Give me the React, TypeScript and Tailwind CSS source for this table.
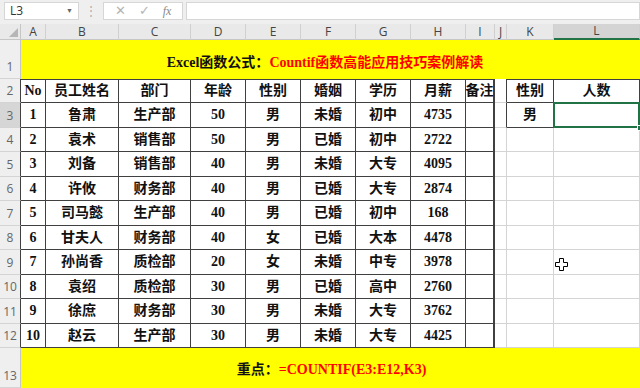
import React from "react";

const cols = ["A", "B", "C", "D", "E", "F", "G", "H", "I", "J", "K", "L"];

const rows = [
  ["1", "鲁肃", "生产部", "50", "男", "未婚", "初中", "4735"],
  ["2", "袁术", "销售部", "50", "男", "已婚", "初中", "2722"],
  ["3", "刘备", "销售部", "40", "男", "未婚", "大专", "4095"],
  ["4", "许攸", "财务部", "40", "男", "已婚", "大专", "2874"],
  ["5", "司马懿", "生产部", "40", "男", "已婚", "初中", "168"],
  ["6", "甘夫人", "财务部", "40", "女", "已婚", "大本", "4478"],
  ["7", "孙尚香", "质检部", "20", "女", "未婚", "中专", "3978"],
  ["8", "袁绍", "质检部", "30", "男", "已婚", "高中", "2760"],
  ["9", "徐庶", "财务部", "30", "男", "未婚", "大专", "3762"],
  ["10", "赵云", "生产部", "30", "男", "未婚", "大专", "4425"],
];

const header = ["No", "员工姓名", "部门", "年龄", "性别", "婚姻", "学历", "月薪", "备注"];

const RowHead = ({ n, dark, active, h }: { n: number; dark?: boolean; active?: boolean; h: string }) => (
  <div
    className={`${h} flex items-end justify-center pb-[2px] border-b border-[#d4d4d4] border-r text-[12px] text-[#666] font-['Open_Sans',sans-serif] ${
      dark ? "border-r-[#404040]" : "border-r-[#c6c6c6]"
    } ${active ? "bg-[#d6d6d6]" : "bg-[#efefef]"}`}
  >
    {n}
  </div>
);

const App = () => {
  return (
    <div className="relative w-[640px] h-[388px] overflow-hidden bg-white font-['Liberation_Serif','Noto_Sans_CJK_SC',serif] text-[#111]">
      {/* formula bar */}
      <div className="h-[24px] bg-[#efefef] flex items-start pt-[2px] font-['Open_Sans',sans-serif]">
        <div className="ml-[4px] w-[75px] h-[18px] bg-white border border-[#d6d6d6] flex items-center justify-between px-[5px] text-[12px] text-[#333]">
          <span>L3</span>
          <span className="text-[7px] text-[#666]">▼</span>
        </div>
        <div className="w-[24px] h-[18px] flex items-center justify-center text-[#b0b0b0] text-[12px]">⋮</div>
        <div className="w-[80px] h-[18px] bg-white border border-[#d6d6d6] flex items-center justify-around px-[4px] text-[#b4b4b4]">
          <span className="text-[13px]">✕</span>
          <span className="text-[13px]">✓</span>
          <span className="text-[12px] italic font-['Liberation_Serif',serif] text-[#888]">fx</span>
        </div>
        <div className="ml-[3px] flex-1 h-[18px] bg-white border border-[#d6d6d6]" />
      </div>

      <div className="grid grid-cols-[21px_25px_73px_72px_55px_55px_55px_55px_55px_29px_12px_47px_86px]">
        {/* column headers */}
        <div className="h-[16px] bg-[#e9e9e9] border-r border-b border-[#c6c6c6] relative">
          <div className="absolute right-[2px] bottom-[2px] w-0 h-0 border-l-[9px] border-l-transparent border-b-[9px] border-b-[#b6b6b6]" />
        </div>
        {cols.map((c) => (
          <div
            key={c}
            className={`h-[16px] flex items-center justify-center text-[12px] font-['Open_Sans',sans-serif] border-r border-[#d0d0d0] ${
              c === "L"
                ? "bg-[#d4d4d4] text-[#444] border-b-2 border-b-[#217346]"
                : "bg-[#e9e9e9] text-[#444] border-b border-b-[#c6c6c6]"
            }`}
          >
            {c}
          </div>
        ))}

        {/* row 1 */}
        <RowHead n={1} h="h-[38.5px]" />
        <div className="col-span-12 h-[38.5px] bg-[#ffff00] flex items-center justify-center pr-[11px] pt-[6px] text-[14px] font-bold whitespace-nowrap">
          <span>Excel函数公式：</span>
          <span className="text-[#f00]">Countif函数高能应用技巧案例解读</span>
        </div>

        {/* row 2 */}
        <RowHead n={2} dark h="h-[24.5px]" />
        {header.map((t, i) => (
          <div
            key={t}
            className={`h-[24.5px] flex items-center justify-center text-[14px] font-bold whitespace-nowrap border-t border-b border-r border-[#404040] ${
              i === 8 ? "border-r-2 text-[13.5px]" : ""
            }`}
          >
            {t}
          </div>
        ))}
        <div className="h-[24.5px] border-b border-r border-[#404040] border-b-[#d4d4d4]" />
        <div className="h-[24.5px] flex items-center justify-center text-[14px] font-bold border-t border-b border-r border-[#404040]">
          性别
        </div>
        <div className="h-[24.5px] flex items-center justify-center text-[14px] font-bold border-t border-b border-r border-[#404040]">
          人数
        </div>

        {/* data rows */}
        {rows.map((r, ri) => (
          <React.Fragment key={ri}>
            <RowHead n={ri + 3} dark active={ri === 0} h="h-[24.5px]" />
            {[...r, ""].map((v, ci) => (
              <div
                key={ci}
                className={`h-[24.5px] flex items-center justify-center text-[14px] font-bold border-b border-r border-[#404040] ${
                  ci === 8 ? "border-r-2" : ""
                }`}
              >
                {v}
              </div>
            ))}
            <div
              className={`h-[24.5px] border-b border-r border-b-[#d4d4d4] ${
                ri === 0 ? "border-r-[#404040]" : "border-r-[#d4d4d4]"
              }`}
            />
            {ri === 0 ? (
              <>
                <div className="h-[24.5px] flex items-center justify-center text-[14px] font-bold border-b border-r border-[#404040]">
                  男
                </div>
                <div className="relative h-[24.5px] border-b border-r border-[#d4d4d4]">
                  <div className="absolute -left-[1px] -top-[1px] -right-[1px] -bottom-[1px] border-2 border-[#217346]" />
                  <div className="absolute -right-[4px] -bottom-[4px] w-[6px] h-[6px] bg-[#217346] border border-white" />
                </div>
              </>
            ) : (
              <>
                <div className="h-[24.5px] border-b border-r border-[#d4d4d4]" />
                <div className="h-[24.5px] border-b border-r border-[#d4d4d4]" />
              </>
            )}
          </React.Fragment>
        ))}

        {/* row 13 */}
        <RowHead n={13} h="h-[40px]" />
        <div className="col-span-12 h-[40px] bg-[#ffff00] flex items-center justify-center pl-[2px] pt-[2px] text-[14px] font-bold">
          <span>重点：</span>
          <span className="text-[#f00]">=COUNTIF(E3:E12,K3)</span>
        </div>
      </div>

      {/* cell cursor */}
      <svg className="absolute left-[555px] top-[258px]" width="13" height="13" viewBox="0 0 13 13">
        <path
          d="M4.5 0.5h4v4h4v4h-4v4h-4v-4h-4v-4h4z"
          fill="white"
          stroke="black"
          strokeWidth="1"
        />
      </svg>
    </div>
  );
};

export default App;
